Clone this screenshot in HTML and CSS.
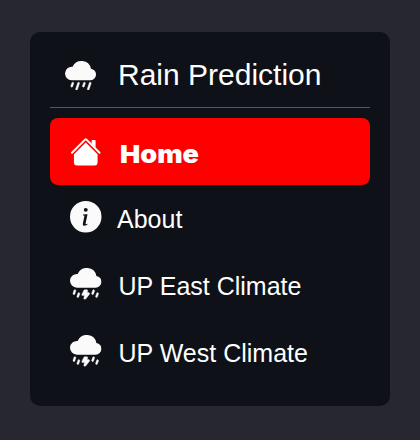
FILE: index.html
```
<!DOCTYPE html>
<html lang="en">
<head>
<meta charset="utf-8">
<title>Rain Prediction</title>
<link rel="stylesheet" href="styles.css">
</head>
<body>
<svg class="defs" aria-hidden="true">
  <symbol id="storm" viewBox="0 0 16 16"><path class="drops" d="M2.658 11.026a.5.5 0 0 1 .316.632l-.5 1.5a.5.5 0 1 1-.948-.316l.5-1.5a.5.5 0 0 1 .632-.316zm9.5 0a.5.5 0 0 1 .316.632l-.5 1.5a.5.5 0 1 1-.948-.316l.5-1.5a.5.5 0 0 1 .632-.316zm-7.5 1.5a.5.5 0 0 1 .316.632l-.5 1.5a.5.5 0 1 1-.948-.316l.5-1.5a.5.5 0 0 1 .632-.316zm9.5 0a.5.5 0 0 1 .316.632l-.5 1.5a.5.5 0 1 1-.948-.316l.5-1.5a.5.5 0 0 1 .632-.316zm-7.105-1.25A.5.5 0 0 1 7.5 11h1a.5.5 0 0 1 .474.658l-.28.842H9.5a.5.5 0 0 1 .39.812l-2 2.5a.5.5 0 0 1-.875-.433L7.36 14H6.5a.5.5 0 0 1-.447-.724l1-2z"/><path d="M13.405 4.027a5.001 5.001 0 0 0-9.499-1.004A3.5 3.5 0 1 0 3.5 10H13a3 3 0 0 0 .405-5.973z"/></symbol>
</svg>
<nav class="menu">
  <header class="title">
    <svg class="icon" viewBox="0 0 16 16"><path class="drops" d="M4.158 12.025a.5.5 0 0 1 .316.633l-.5 1.5a.5.5 0 1 1-.948-.316l.5-1.5a.5.5 0 0 1 .632-.317zm3 0a.5.5 0 0 1 .316.633l-1 3a.5.5 0 1 1-.948-.316l1-3a.5.5 0 0 1 .632-.317zm3 0a.5.5 0 0 1 .316.633l-.5 1.5a.5.5 0 1 1-.948-.316l.5-1.5a.5.5 0 0 1 .632-.317zm3 0a.5.5 0 0 1 .316.633l-1 3a.5.5 0 1 1-.948-.316l1-3a.5.5 0 0 1 .632-.317z"/><path d="M13.405 5.027a5.001 5.001 0 0 0-9.499-1.004A3.5 3.5 0 1 0 3.5 11H13a3 3 0 0 0 .405-5.973z"/></svg>
    <span>Rain Prediction</span>
  </header>
  <ul class="list">
    <li class="item active">
      <svg class="icon" viewBox="0 0 16 16"><path d="m8 3.293 6 6V13.5a1.5 1.5 0 0 1-1.5 1.5h-9A1.5 1.5 0 0 1 2 13.5V9.293l6-6zm5-.793V6l-2-2V2.5a.5.5 0 0 1 .5-.5h1a.5.5 0 0 1 .5.5z"/><path d="M7.293 1.5a1 1 0 0 1 1.414 0l6.647 6.646a.5.5 0 0 1-.708.708L8 2.207 1.354 8.854a.5.5 0 1 1-.708-.708L7.293 1.5z"/></svg>
      <span>Home</span>
    </li>
    <li class="item about">
      <svg class="icon" viewBox="0 0 16 16"><path d="M8 16A8 8 0 1 0 8 0a8 8 0 0 0 0 16zm.93-9.412-1 4.705c-.07.34.029.533.304.533.194 0 .487-.07.686-.246l-.088.416c-.287.346-.92.598-1.465.598-.703 0-1.002-.422-.808-1.319l.738-3.468c.064-.293.006-.399-.287-.47l-.451-.081.082-.381 2.29-.287zM8 5.5a1 1 0 1 1 0-2 1 1 0 0 1 0 2z"/></svg>
      <span>About</span>
    </li>
    <li class="item">
      <svg class="icon"><use href="#storm"/></svg>
      <span>UP East Climate</span>
    </li>
    <li class="item">
      <svg class="icon"><use href="#storm"/></svg>
      <span>UP West Climate</span>
    </li>
  </ul>
</nav>
</body>
</html>
```
FILE: styles.css
```
* {
  box-sizing: border-box;
}

body {
  margin: 0;
  padding: 32px 30px 34px;
  height: 440px;
  background: #262730;
  color: #fafafa;
  font-family: "Liberation Sans", Arial, sans-serif;
}

.defs {
  position: absolute;
  width: 0;
  height: 0;
}

.menu {
  height: 374px;
  padding: 20px;
  border-radius: 10px;
  background: #0e1117;
}

.title {
  display: flex;
  align-items: center;
  height: 56px;
  padding: 0 0 10px 14.5px;
  border-bottom: 1px solid #56575b;
  font-size: 30px;
  line-height: 46px;
}

.title span {
  margin-left: 22.5px;
  color: #ffffff;
}

.icon {
  flex: none;
  width: 31.5px;
  height: 31.5px;
  fill: currentColor;
}

.drops {
  stroke: currentColor;
  stroke-width: 0.2;
}

.title .icon {
  width: 31px;
  height: 31px;
  margin-bottom: 1px;
}

.list {
  margin: 10px 0 0;
  padding: 0;
  list-style: none;
}

.item {
  display: flex;
  align-items: center;
  height: 67px;
  padding: 0 20px;
  border-radius: 8px;
  font-size: 25px;
  line-height: 30px;
}

.item span {
  margin: 4px 0 0 17px;
  color: #ffffff;
}

.item .icon {
  margin-top: 1px;
}

.about span {
  margin-left: 15.5px;
}

.active {
  margin-bottom: -2px;
  background: #ff0000;
  color: #ffffff;
}

.active .icon {
  margin-top: 0;
}

.active span {
  margin-left: 18px;
  font-family: "Arial Black", Inter, sans-serif;
  font-weight: 900;
  transform: scaleX(1.08);
  transform-origin: left;
}
```
